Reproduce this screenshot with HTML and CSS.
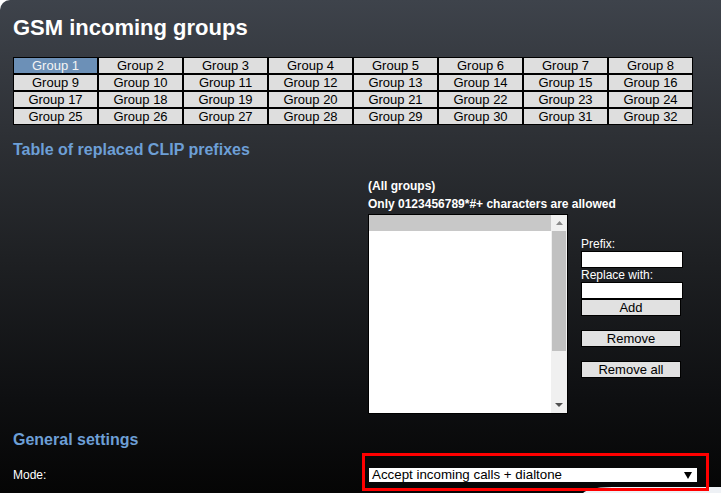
FILE: index.html
```html
<!DOCTYPE html>
<html>
<head>
<meta charset="utf-8">
<title>GSM incoming groups</title>
<link rel="stylesheet" href="styles.css">
</head>
<body>
<div class="panel">
  <h1 class="title">GSM incoming groups</h1>
  <table class="groups">
    <tr><td class="sel">Group 1</td><td>Group 2</td><td>Group 3</td><td>Group 4</td><td>Group 5</td><td>Group 6</td><td>Group 7</td><td>Group 8</td></tr>
    <tr><td>Group 9</td><td>Group 10</td><td>Group 11</td><td>Group 12</td><td>Group 13</td><td>Group 14</td><td>Group 15</td><td>Group 16</td></tr>
    <tr><td>Group 17</td><td>Group 18</td><td>Group 19</td><td>Group 20</td><td>Group 21</td><td>Group 22</td><td>Group 23</td><td>Group 24</td></tr>
    <tr><td>Group 25</td><td>Group 26</td><td>Group 27</td><td>Group 28</td><td>Group 29</td><td>Group 30</td><td>Group 31</td><td>Group 32</td></tr>
  </table>

  <h2 class="section">Table of replaced CLIP prefixes</h2>

  <div class="clip">
    <div class="note">(All groups)</div>
    <div class="note">Only 0123456789*#+ characters are allowed</div>
    <div class="clip-row">
      <div class="listbox">
        <div class="list-area"><div class="list-head"></div></div>
        <div class="scrollbar">
          <div class="sb-btn">
            <svg width="7" height="4" viewBox="0 0 7 4"><path d="M3.5 0L7 4H0z" fill="#8a8a8a"/></svg>
          </div>
          <div class="sb-track"><div class="sb-thumb"></div></div>
          <div class="sb-btn">
            <svg width="8" height="4" viewBox="0 0 8 4"><path d="M0 0H8L4 4z" fill="#505050"/></svg>
          </div>
        </div>
      </div>
      <div class="side">
        <div class="field-label">Prefix:</div>
        <div class="field"></div>
        <div class="field-label">Replace with:</div>
        <div class="field"></div>
        <div class="btn">Add</div>
        <div class="btn spaced">Remove</div>
        <div class="btn spaced">Remove all</div>
      </div>
    </div>
  </div>

  <h2 class="section general">General settings</h2>

  <div class="mode-row">
    <span class="mode-label">Mode:</span>
    <div class="select">
      <span class="select-text">Accept incoming calls + dialtone</span>
      <svg class="select-arrow" width="8" height="7" viewBox="0 0 8 7"><path d="M0 0H8L4 7z" fill="#000"/></svg>
    </div>
  </div>
</div>
<div class="peek"></div>
<div class="highlight"></div>
</body>
</html>
```

FILE: styles.css
```css
html, body {
  margin: 0;
  padding: 0;
  background: #ffffff;
  font-family: "Liberation Sans", Arial, sans-serif;
  overflow: hidden;
}

.panel {
  box-sizing: border-box;
  min-height: 493px;
  padding: 15px 0 0 13px;
  border-top-left-radius: 10px;
  color: #ffffff;
  background: linear-gradient(180deg, #3e434b 0px, #2e3136 130px, #1e2023 260px, #0e0f11 400px, #050505 493px);
}

.title {
  margin: 0;
  font-size: 22px;
  line-height: 25px;
  font-weight: bold;
  color: #ffffff;
}

.groups {
  margin-top: 17px;
  border-collapse: separate;
  border-spacing: 0;
  table-layout: fixed;
  width: 680px;
}

.groups td {
  width: 83px;
  height: 15px;
  padding: 0;
  border: 1px solid #000;
  background: #dedede;
  color: #000;
  font-size: 13px;
  line-height: 15px;
  text-align: center;
  white-space: nowrap;
}

.groups td.sel {
  background: #6c90b7;
  color: #f4f4f4;
}

.section {
  margin: 16px 0 0 0;
  font-size: 16px;
  line-height: 18px;
  font-weight: bold;
  color: #6d9fd6;
}

.clip {
  margin: 18px 0 0 355px;
}

.note {
  font-size: 12px;
  line-height: 18px;
  font-weight: bold;
  color: #ffffff;
}

.clip-row {
  display: flex;
  align-items: flex-start;
  margin-top: 1px;
}

.listbox {
  box-sizing: border-box;
  width: 200px;
  height: 200px;
  border: 1px solid #000;
  background: #ffffff;
  display: flex;
}

.list-area {
  flex: 1;
}

.list-head {
  height: 16px;
  background: #c8c8c8;
}

.scrollbar {
  width: 16px;
  background: #f0f0f0;
  display: flex;
  flex-direction: column;
}

.sb-btn {
  height: 16px;
  display: flex;
  align-items: center;
  justify-content: center;
}

.sb-track {
  flex: 1;
  padding: 0 1px;
}

.sb-thumb {
  height: 120px;
  background: #c1c1c1;
}

.side {
  margin-left: 13px;
  padding-top: 23px;
  display: flex;
  flex-direction: column;
  align-items: flex-start;
}

.field-label {
  font-size: 12px;
  line-height: 14px;
  color: #ffffff;
}

.field {
  box-sizing: border-box;
  width: 102px;
  height: 17px;
  border: 1px solid #000;
  background: #ffffff;
}

.btn {
  box-sizing: border-box;
  width: 100px;
  height: 17px;
  border: 1px solid #000;
  background: #e1e1e1;
  color: #000;
  font-size: 13px;
  line-height: 15px;
  text-align: center;
}

.btn.spaced {
  margin-top: 14px;
}

.general {
  margin-top: 17px;
}

.mode-row {
  display: grid;
  grid-template-columns: 356px 328px;
  align-items: center;
  margin-top: 19px;
}

.mode-label {
  font-size: 12px;
  line-height: 14px;
  color: #ffffff;
}

.select {
  height: 14px;
  background: #ffffff;
  color: #000;
  display: flex;
  align-items: center;
  justify-content: space-between;
  padding: 0 5px 0 3px;
}

.select-text {
  font-size: 13.33px;
  line-height: 14px;
  white-space: nowrap;
}

.select-arrow {
  display: block;
}

.highlight {
  position: absolute;
  left: 362px;
  top: 453px;
  width: 341px;
  height: 32px;
  border: 3px solid #ff0000;
}

.peek {
  position: absolute;
  left: 582px;
  top: 487px;
  width: 139px;
  height: 10px;
  background: #eef1f5;
  border-top-left-radius: 30px 8px;
}
```
